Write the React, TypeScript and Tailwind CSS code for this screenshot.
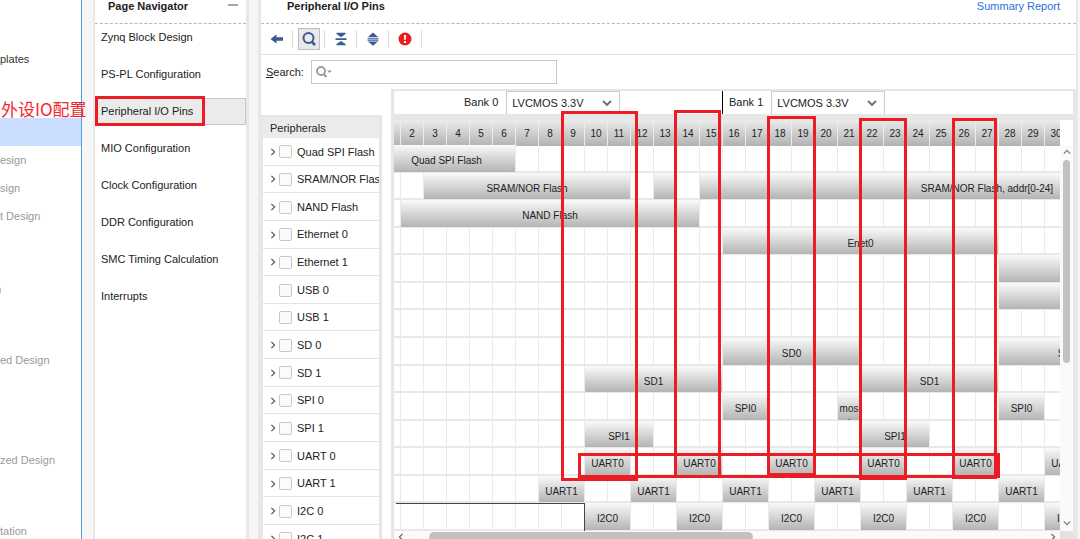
import type { ReactNode } from "react";
import clsx from "clsx";

interface Bar {
  from: number;
  to: number;
  label?: string;
}

interface Peripheral {
  name: string;
  expandable: boolean;
  bars: Bar[];
}

const pairs = (starts: number[], label: string): Bar[] =>
  starts.map((from) => ({ from, to: from + 1, label }));

const PINS = Array.from({ length: 40 }, (_, i) => i + 1);

const PERIPHERALS: Peripheral[] = [
  { name: "Quad SPI Flash", expandable: true, bars: [{ from: 1, to: 6, label: "Quad SPI Flash" }] },
  {
    name: "SRAM/NOR Flash",
    expandable: true,
    bars: [
      { from: 3, to: 11, label: "SRAM/NOR Flash" },
      { from: 13, to: 13 },
      { from: 15, to: 39, label: "SRAM/NOR Flash, addr[0-24]" },
    ],
  },
  { name: "NAND Flash", expandable: true, bars: [{ from: 2, to: 14, label: "NAND Flash" }] },
  { name: "Ethernet 0", expandable: true, bars: [{ from: 16, to: 27, label: "Enet0" }] },
  { name: "Ethernet 1", expandable: true, bars: [{ from: 28, to: 39 }] },
  { name: "USB 0", expandable: false, bars: [{ from: 28, to: 39 }] },
  { name: "USB 1", expandable: false, bars: [] },
  {
    name: "SD 0",
    expandable: true,
    bars: [
      { from: 16, to: 21, label: "SD0" },
      { from: 28, to: 33, label: "SD0" },
    ],
  },
  {
    name: "SD 1",
    expandable: true,
    bars: [
      { from: 10, to: 15, label: "SD1" },
      { from: 22, to: 27, label: "SD1" },
    ],
  },
  {
    name: "SPI 0",
    expandable: true,
    bars: [
      { from: 16, to: 17, label: "SPI0" },
      { from: 21, to: 21, label: "mosi" },
      { from: 28, to: 29, label: "SPI0" },
    ],
  },
  {
    name: "SPI 1",
    expandable: true,
    bars: [
      { from: 10, to: 12, label: "SPI1" },
      { from: 22, to: 24, label: "SPI1" },
    ],
  },
  { name: "UART 0", expandable: true, bars: pairs([10, 14, 18, 22, 26, 30], "UART0") },
  { name: "UART 1", expandable: true, bars: pairs([8, 12, 16, 20, 24, 28], "UART1") },
  { name: "I2C 0", expandable: true, bars: pairs([10, 14, 18, 22, 26, 30], "I2C0") },
];

const NAV_ITEMS = [
  "Zynq Block Design",
  "PS-PL Configuration",
  "Peripheral I/O Pins",
  "MIO Configuration",
  "Clock Configuration",
  "DDR Configuration",
  "SMC Timing Calculation",
  "Interrupts",
];

const FLOW_ITEMS = [
  { label: "plates", className: "mt-[45px] text-[#333]" },
  { label: "", className: "mt-[45px] bg-[#ccdeff]" },
  { label: "esign", className: "text-[#999]" },
  { label: "sign", className: "text-[#999]" },
  { label: "t Design", className: "text-[#999]" },
  { label: "n", className: "mt-[45px] -indent-[5px] text-[#6f8fd0]" },
  { label: "ed Design", className: "mt-[43px] text-[#999]" },
  { label: "zed Design", className: "mt-[72px] text-[#999]" },
  { label: "tation", className: "mt-[43px] text-[#999]" },
];

// Review marks drawn over the pin table
const MARKS = [
  "left-[95px] top-[96px] h-[30px] w-[110px]",
  "left-[561px] top-[111px] h-[370px] w-[77px]",
  "left-[674px] top-[110px] h-[368px] w-[47px]",
  "left-[767px] top-[116px] h-[360px] w-[49px]",
  "left-[859px] top-[118px] h-[362px] w-[48px]",
  "left-[952px] top-[118px] h-[361px] w-[45px]",
  "left-[578px] top-[453px] h-[25px] w-[422px]",
];

function Chevron({ d, className }: { d: string; className?: string }) {
  return (
    <svg viewBox="0 0 10 10" className={clsx("shrink-0", className)} fill="none" stroke="currentColor">
      <path d={d} />
    </svg>
  );
}

const DOWN = "M1 3l4 4 4-4";
const UP = "M1 7l4-4 4 4";
const LEFT = "M7 1L3 5l4 4";
const RIGHT = "M3 1l4 4-4 4";

function ToolButton({ label, active, children }: { label: string; active?: boolean; children: ReactNode }) {
  return (
    <div className="flex w-8 items-center justify-center">
      <button
        type="button"
        aria-label={label}
        className={clsx(
          "flex h-[22px] w-[22px] items-center justify-center",
          active && "border border-[#bdbdbd] bg-[#e9e9e9]",
        )}
      >
        {children}
      </button>
    </div>
  );
}

function Toolbar() {
  return (
    <div className="flex h-[31px] items-center border-b border-[#e2e2e2]">
      <div className="flex h-[18px] divide-x divide-[#dcdcdc] border-r border-[#dcdcdc]">
        <ToolButton label="Back">
          <svg viewBox="0 0 14 12" className="h-3 w-3.5 shrink-0" fill="#3b5a93">
            <path d="M.5 6L6.500 1.500v2.700H13v3.600H6.500v2.700z" />
          </svg>
        </ToolButton>
        <ToolButton label="Search" active>
          <svg viewBox="0 0 16 16" className="h-4 w-4 shrink-0" fill="none" stroke="#3b5a93">
            <circle cx="7.500" cy="7" r="5" strokeWidth="2" />
            <path d="M10.500 10.500l3.500 3.500" strokeWidth="2.500" />
          </svg>
        </ToolButton>
        <ToolButton label="Collapse All">
          <svg viewBox="0 0 12 14" className="h-3.5 w-3 shrink-0" fill="#3b5a93">
            <path d="M1.500 .8h9v1.200L6 5.200 1.500 2zM.5 6.200h11v1.700H.5zM6 8.900l4.500 3.200v1.200h-9v-1.200z" />
          </svg>
        </ToolButton>
        <ToolButton label="Expand All">
          <svg viewBox="0 0 12 14" className="h-3.5 w-3 shrink-0" fill="#3b5a93">
            <path d="M6 .5l5 4.500H1zM.6 5.700h10.800v1.100H.6zM.6 7.600h10.800v1.100H.6zM1 9.500h10L6 13.700z" />
          </svg>
        </ToolButton>
        <ToolButton label="Errors">
          <svg viewBox="0 0 14 14" className="h-3.5 w-3.5 shrink-0">
            <circle cx="7" cy="7" r="6.500" fill="#ee1c1c" />
            <path d="M5.900 3h2.200l-.4 5H6.300zM6 9h2v2H6z" fill="#fff" />
          </svg>
        </ToolButton>
      </div>
    </div>
  );
}

function FlowSidebar() {
  return (
    <aside className="w-[82px] shrink-0 overflow-hidden border-r border-[#4f9fe0] bg-white">
      {FLOW_ITEMS.map((item, i) => (
        <div key={i} className={clsx("h-7 leading-7 whitespace-nowrap", item.className)}>
          {item.label}
        </div>
      ))}
    </aside>
  );
}

function PageNavigator() {
  return (
    <nav className="ml-[11px] w-[156px] shrink-0 border-l-2 border-r-3 border-[#e8e8e8] bg-white">
      <header className="flex h-6 justify-between border-b border-dashed border-[#b8b8b8] pr-2 pl-[13px] leading-3">
        <h2 className="font-bold">Page Navigator</h2>
        <button type="button" aria-label="Minimize" className="mt-1 h-0.5 w-[10px] bg-[#a9a9a9]" />
      </header>
      <ul className="flex flex-col gap-[10px]">
        {NAV_ITEMS.map((item) => (
          <li key={item}>
            <a
              href="#"
              className={clsx(
                "block h-[27px] border pl-[5px] leading-[25px] whitespace-nowrap",
                item === "Peripheral I/O Pins" ? "border-[#c6c6c6] bg-[#ebebeb]" : "border-transparent",
              )}
            >
              {item}
            </a>
          </li>
        ))}
      </ul>
    </nav>
  );
}

function PeripheralRow({ name, expandable }: { name: string; expandable: boolean }) {
  return (
    <li className="flex min-h-0 items-center overflow-hidden border-b border-[#e4e4e4] pt-px pl-1.5 whitespace-nowrap">
      <span className="w-[10px] shrink-0 text-[#555]">
        {expandable && <Chevron d={RIGHT} className="h-2 w-2 stroke-[1.500]" />}
      </span>
      <label className="flex items-center">
        <input
          type="checkbox"
          className="mr-[5px] h-[13px] w-[13px] shrink-0 appearance-none rounded-xs border border-[#c8c8c8] bg-[#fbfbfb]"
        />
        {name}
      </label>
    </li>
  );
}

function PeripheralList() {
  return (
    <section className="mt-[26px] flex w-[121px] shrink-0 flex-col border-t-2 border-r-3 border-l-2 border-[#e6e6e6]">
      <h3 className="h-[21px] bg-[#ebebeb] pl-[7px] leading-[22px]">Peripherals</h3>
      <ul className="-mb-[14px] grid min-h-0 flex-1 grid-rows-[repeat(14,minmax(0,1fr))_28px]">
        {PERIPHERALS.map((p) => (
          <PeripheralRow key={p.name} name={p.name} expandable={p.expandable} />
        ))}
        <PeripheralRow name="I2C 1" expandable />
      </ul>
    </section>
  );
}

function BankSelect({ id, label }: { id: string; label: string }) {
  return (
    <>
      <label htmlFor={id}>{label}</label>
      <div className="relative ml-2 flex items-center">
        <select
          id={id}
          className="h-[23px] w-[114px] appearance-none border border-b-0 border-[#cdcdcd] bg-white pl-[5px]"
        >
          <option>LVCMOS 3.3V</option>
          <option>LVCMOS 2.5V</option>
          <option>LVCMOS 1.8V</option>
        </select>
        <Chevron d={DOWN} className="pointer-events-none absolute right-2 h-[10px] w-[10px] stroke-[1.800] text-[#6b6b6b]" />
      </div>
    </>
  );
}

function PinRow({ bars, reserved }: { bars: Bar[]; reserved: boolean }) {
  return (
    <div className="-ml-4 grid min-h-0 grid-cols-[repeat(40,23px)] grid-rows-1">
      {PINS.map((pin) => (
        <div
          key={pin}
          style={{ gridColumn: pin }}
          className="row-start-1 border-r border-b-2 border-r-[#ebebeb] border-b-[#e8e8e8]"
        />
      ))}
      {reserved && <div className="col-start-1 col-end-10 row-start-1 ml-[18px] border-t border-r border-[#444]" />}
      {bars.map((bar) => (
        <div
          key={bar.from}
          style={{ gridColumn: `${bar.from} / ${bar.to + 1}` }}
          className="row-start-1 mr-px mb-px overflow-hidden bg-linear-to-b from-[#fafafa] to-[#b4b4b4] px-px pt-2 text-center text-[10px] leading-[15px] break-all"
        >
          {bar.label}
        </div>
      ))}
    </div>
  );
}

function PinTable() {
  return (
    <section className="ml-[9px] flex min-w-0 flex-1 flex-col border-x-3 border-t-2 border-[#e6e6e6]">
      <div className="flex h-[23px] items-center">
        <div className="flex w-[328px] shrink-0 items-center pl-[70px]">
          <BankSelect id="bank0" label="Bank 0" />
        </div>
        <div className="flex h-full flex-1 items-center border-l border-black pl-1.5">
          <BankSelect id="bank1" label="Bank 1" />
        </div>
      </div>
      <div className="h-1.5 shrink-0 bg-[#e6e6e6]" />
      <div className="flex min-h-0 flex-1">
        <div className="flex min-w-0 flex-1 flex-col overflow-hidden">
          <div className="-ml-4 grid h-6 shrink-0 grid-cols-[repeat(40,23px)]">
            {PINS.map((pin) => (
              <div
                key={pin}
                className="border-r border-[#ececec] bg-linear-to-b from-[#ececec] to-[#b2b2b2] pt-0.5 text-center text-[10px] leading-6"
              >
                {pin}
              </div>
            ))}
          </div>
          <div className="grid min-h-0 flex-1 grid-rows-[repeat(14,minmax(0,1fr))] pt-px">
            {PERIPHERALS.map((p) => (
              <PinRow key={p.name} bars={p.bars} reserved={p.name === "I2C 0"} />
            ))}
          </div>
        </div>
        <div className="flex w-[13px] shrink-0 flex-col items-center bg-[#fafafa] text-[#777]">
          <div className="h-[25px] w-full shrink-0 bg-white" />
          <Chevron d={UP} className="my-[3px] h-2 w-2 stroke-[1.500]" />
          <div className="mt-px h-[203px] w-[7px] rounded-full bg-[#c1c1c1]" />
          <Chevron d={DOWN} className="mt-auto mb-1 h-2 w-2 stroke-[1.500]" />
        </div>
      </div>
      <div className="flex h-2 shrink-0 overflow-hidden bg-[#fafafa] text-[#666]">
        <Chevron d={LEFT} className="mt-0.5 ml-[3px] h-2 w-2 stroke-[1.500]" />
        <div className="mt-px ml-6 h-[10px] w-[324px] rounded-full bg-[#c1c1c1]" />
        <Chevron d={RIGHT} className="mt-0.5 mr-[3px] ml-auto h-2 w-2 stroke-[1.500]" />
        <div className="w-[13px] bg-[#e2e2e2]" />
      </div>
    </section>
  );
}

function PinsPanel() {
  return (
    <main className="mr-0.5 ml-[9px] flex min-w-0 flex-1 flex-col border-r-2 border-l-3 border-[#e8e8e8] bg-white">
      <header className="flex h-6 shrink-0 justify-between border-b border-dashed border-[#b8b8b8] pr-4 pl-[26px] leading-3">
        <h1 className="font-bold">Peripheral I/O Pins</h1>
        <a href="#" className="text-[#2a6fdb]">
          Summary Report
        </a>
      </header>
      <Toolbar />
      <div className="flex h-[34px] shrink-0 items-center pl-[5px]">
        <label htmlFor="search" className="w-[45px]">
          <span className="underline">S</span>earch:
        </label>
        <div className="relative flex items-center">
          <svg viewBox="0 0 17 12" className="absolute left-[5px] h-3 w-[17px]" fill="none" stroke="#999">
            <circle cx="5" cy="5" r="4" strokeWidth="1.800" />
            <path d="M7.500 8l3 3" strokeWidth="2" />
            <path d="M11 4.500h5L13.500 7z" fill="#999" stroke="none" />
          </svg>
          <input id="search" type="text" className="h-6 w-[246px] border border-[#c9c9c9] bg-white pl-6" />
        </div>
      </div>
      <div className="flex min-h-0 flex-1">
        <PeripheralList />
        <PinTable />
      </div>
    </main>
  );
}

export default function App() {
  return (
    <div className="relative flex h-screen overflow-hidden bg-[#f6f6f6] font-['Liberation_Sans',Arial,sans-serif] text-[11px] text-[#222]">
      <FlowSidebar />
      <PageNavigator />
      <PinsPanel />
      {MARKS.map((mark) => (
        <div key={mark} className={clsx("pointer-events-none absolute border-3 border-[#ed1c24]", mark)} />
      ))}
      <p className="absolute top-[97px] left-px font-['Noto_Sans_CJK_SC',sans-serif] text-[17px] leading-6 whitespace-nowrap text-[#f5262b]">
        外设IO配置
      </p>
    </div>
  );
}
